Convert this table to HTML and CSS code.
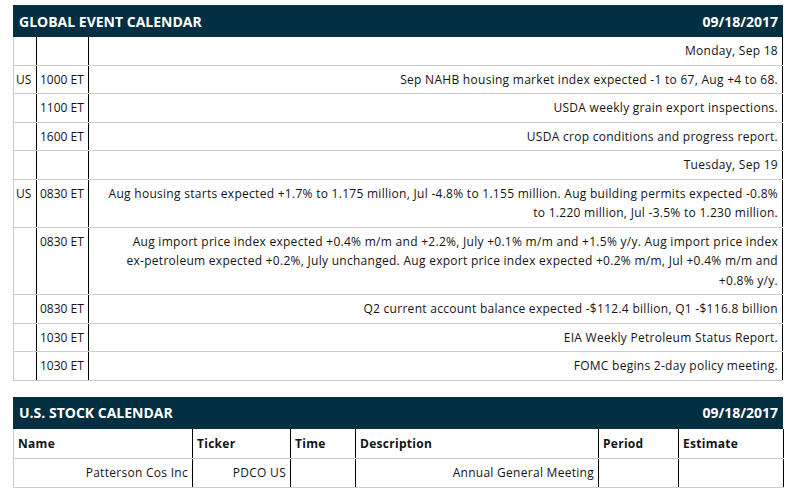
FILE: index.html
```html
<!DOCTYPE html>
<html>
<head>
<meta charset="utf-8">
<link rel="stylesheet" href="styles.css">
</head>
<body>
<section class="panel">
  <div class="bar"><span>GLOBAL EVENT CALENDAR</span><span>09/18/2017</span></div>
  <table class="grid events">
    <colgroup><col class="c-cty"><col class="c-time"><col class="c-desc"></colgroup>
    <tr><td></td><td></td><td>Monday, Sep 18</td></tr>
    <tr><td>US</td><td>1000 ET</td><td>Sep NAHB housing market index expected -1 to 67, Aug +4 to 68.</td></tr>
    <tr><td></td><td>1100 ET</td><td>USDA weekly grain export inspections.</td></tr>
    <tr><td></td><td>1600 ET</td><td>USDA crop conditions and progress report.</td></tr>
    <tr><td></td><td></td><td>Tuesday, Sep 19</td></tr>
    <tr><td>US</td><td>0830 ET</td><td>Aug housing starts expected +1.7% to 1.175 million, Jul -4.8% to 1.155 million. Aug building permits expected -0.8%<br>to 1.220 million, Jul -3.5% to 1.230 million.</td></tr>
    <tr><td></td><td>0830 ET</td><td>Aug import price index expected +0.4% m/m and +2.2%, July +0.1% m/m and +1.5% y/y. Aug import price index<br>ex-petroleum expected +0.2%, July unchanged. Aug export price index expected +0.2% m/m, Jul +0.4% m/m and<br>+0.8% y/y.</td></tr>
    <tr><td></td><td>0830 ET</td><td>Q2 current account balance expected -$112.4 billion, Q1 -$116.8 billion</td></tr>
    <tr><td></td><td>1030 ET</td><td>EIA Weekly Petroleum Status Report.</td></tr>
    <tr><td></td><td>1030 ET</td><td>FOMC begins 2-day policy meeting.</td></tr>
  </table>
</section>
<section class="panel">
  <div class="bar"><span>U.S. STOCK CALENDAR</span><span>09/18/2017</span></div>
  <table class="grid stocks">
    <colgroup><col class="s-name"><col class="s-ticker"><col class="s-time"><col class="s-desc"><col class="s-period"><col class="s-est"></colgroup>
    <tr class="head"><th>Name</th><th>Ticker</th><th>Time</th><th>Description</th><th>Period</th><th>Estimate</th></tr>
    <tr><td>Patterson Cos Inc</td><td>PDCO US</td><td></td><td>Annual General Meeting</td><td></td><td></td></tr>
  </table>
</section>
</body>
</html>
```

FILE: styles.css
```css
html, body {
  margin: 0;
  padding: 0;
  background: #ffffff;
}
body {
  padding: 5px 0 0 13px;
  font-family: "Open Sans", "Noto Sans", sans-serif;
  font-size: 12px;
  color: #141414;
}
.panel {
  width: 770px;
  margin-bottom: 16px;
}
.bar {
  display: flex;
  justify-content: space-between;
  align-items: center;
  height: 32px;
  padding: 0 5px 0 6px;
  background: #032f43;
  color: #ffffff;
  font-weight: bold;
  font-size: 14px;
}
.grid {
  width: 770px;
  border-collapse: collapse;
  table-layout: fixed;
  border-left: 1px solid #cccccc;
  border-right: 1px solid #000000;
  letter-spacing: 0.28px;
}
.grid td, .grid th {
  padding: 4px 4px;
  line-height: 19.5px;
  border-bottom: 1px solid #cccccc;
  border-left: 1px solid #000000;
  vertical-align: top;
  text-align: right;
  white-space: nowrap;
}
.grid tr > :first-child {
  border-left: 1px solid #cccccc;
}
.events td:first-child {
  padding: 4px 2px;
  text-align: left;
  letter-spacing: 0;
}
.events td:nth-child(2) {
  text-align: left;
  padding-left: 3px;
  letter-spacing: 0;
}
.c-cty { width: 23px; }
.c-time { width: 52px; }
.stocks th {
  text-align: left;
  font-weight: bold;
  padding: 5px 4px;
}
.s-name { width: 179px; }
.s-ticker { width: 98px; }
.s-time { width: 65px; }
.s-desc { width: 243px; }
.s-period { width: 80px; }
.s-est { width: 105px; }
```
